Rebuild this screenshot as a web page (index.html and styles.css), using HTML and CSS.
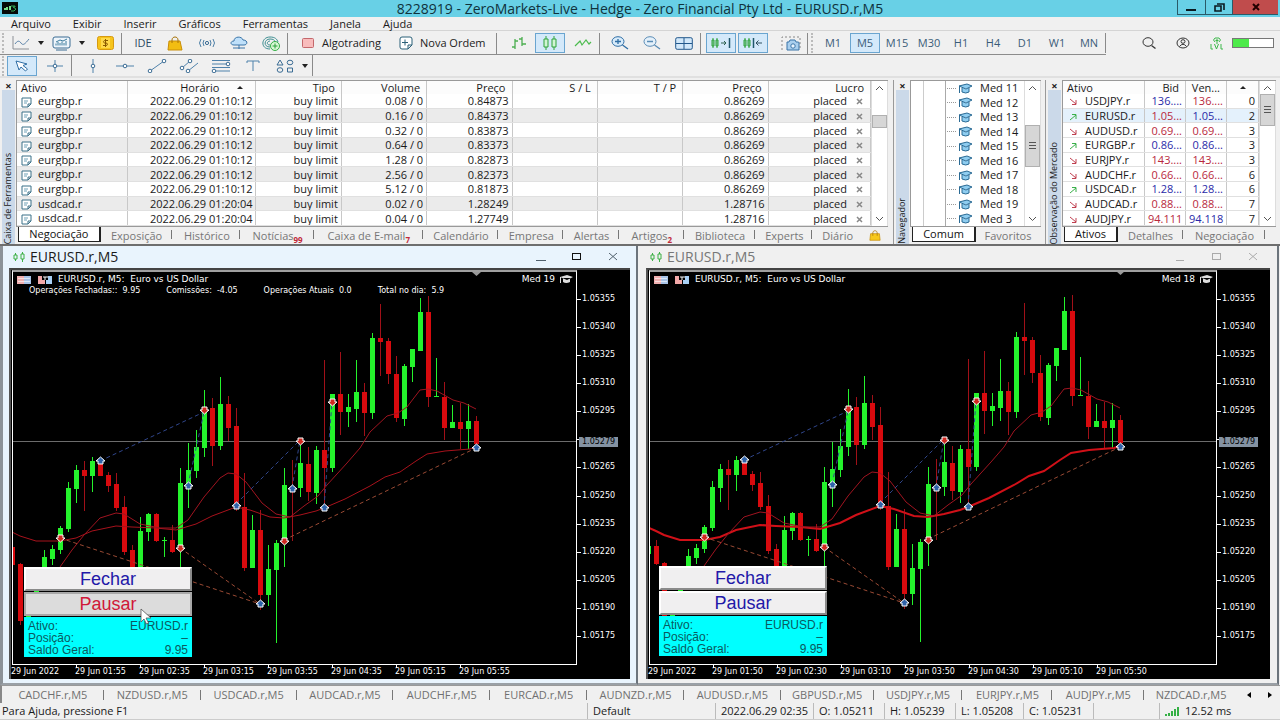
FILE: index.html
```html
<!DOCTYPE html>
<html lang="pt">
<head>
<meta charset="utf-8">
<title>8228919 - ZeroMarkets-Live - Hedge</title>
<link rel="stylesheet" href="styles.css">
</head>
<body>
<header class="titlebar">
  <svg class="app-logo" width="16" height="12" viewBox="0 0 16 12"><rect width="16" height="12" fill="#050a08"/><path d="M2 8V6h2V5h2v3zM7 8V4h2v4z" fill="#7d8"/><path d="M9 4h4v1h-2l3 2-2 2H9" fill="none" stroke="#3a5" stroke-width="1"/></svg>
  <h1 class="app-title">8228919 - ZeroMarkets-Live - Hedge - Zero Financial Pty Ltd - EURUSD.r,M5</h1>
  <div class="win-buttons">
    <button class="win-btn" aria-label="Minimizar"><svg width="12" height="9"><path d="M1 7h10" stroke="#0a1a20" stroke-width="2"/></svg></button>
    <button class="win-btn" aria-label="Restaurar"><svg width="12" height="9"><path d="M2 3h6v5H2zM4 1h7v6" fill="none" stroke="#0a1a20" stroke-width="1.6"/></svg></button>
    <button class="win-btn win-close" aria-label="Fechar janela"><svg width="10" height="9"><path d="M2 1l6 6M8 1L2 7" stroke="#200" stroke-width="2"/></svg></button>
  </div>
</header>
<nav class="menu">
  <button>Arquivo</button><button>Exibir</button><button>Inserir</button><button>Gráficos</button><button>Ferramentas</button><button>Janela</button><button>Ajuda</button>
</nav>
<div class="toolbar toolbar-main">
  <span class="grip"></span>
  <button class="tool-drop" aria-label="Gráfico"><svg width="18" height="14" viewBox="0 0 18 14"><path d="M1 0v13h16" stroke="#8c9096" fill="none"/><path d="M3 8c2-3 4-4 6-1s4 1 8-4" stroke="#5a82a8" fill="none"/></svg><i class="caret"></i></button>
  <button class="tool-drop" aria-label="Modelos"><svg width="19" height="15" viewBox="0 0 19 15"><rect x="1" y="1" width="17" height="11" rx="2" fill="#eef5fb" stroke="#3b6c94"/><path d="M4 9.500V7.500M6 9.500V6M8 9.500V7M10 9.500V5.500M12 9.500V7M14 9.500V5M4 6l4-2 3 1 4-2" stroke="#3b7a9c" fill="none"/><path d="M4 14h11" stroke="#3b6c94"/></svg><i class="caret"></i></button>
  <button class="tool" aria-label="Símbolos"><svg width="17" height="14" viewBox="0 0 17 14"><rect x=".5" y=".5" width="16" height="13" rx="2" fill="#f6c41c" stroke="#d79a10"/><rect x="4" y="2" width="9" height="10" fill="#ffd94a"/><path d="M11 4.500H8c-2 0-2 2.500 0 2.500h1c2 0 2 2.500 0 2.500H6M8.500 3v8" stroke="#8a5a00" fill="none"/></svg></button>
  <span class="sep"></span>
  <button class="tool tool-ide">IDE</button>
  <button class="tool" aria-label="Mercado"><svg width="16" height="15" viewBox="0 0 16 15"><path d="M2 5h11l2 9H1z" fill="#f2bd12" stroke="#c98e08"/><path d="M5 7V4c0-4 6-4 6 0v3" fill="none" stroke="#a87408"/></svg></button>
  <button class="tool" aria-label="Sinais"><svg width="18" height="12" viewBox="0 0 18 12"><circle cx="9" cy="6" r="1.600" fill="none" stroke="#3b6c94"/><path d="M6 3q-2 3 0 6M12 3q2 3 0 6M3 2q-3 4 0 8M15 2q3 4 0 8" fill="none" stroke="#4d7fa6"/></svg></button>
  <button class="tool" aria-label="Nuvem"><svg width="18" height="14" viewBox="0 0 18 14"><path d="M4 9C0 9 0 5 4 5c0-5 8-5 9-1 5 0 5 5 1 5z" fill="#bfe0fa" stroke="#3b75a8"/><path d="M3 12h12M9 9v4" stroke="#3b75a8"/></svg></button>
  <button class="tool" aria-label="VPS"><svg width="19" height="15" viewBox="0 0 19 15"><path d="M8 13C-2 13-1 1 8 1c5 0 7 2 8 5M8 11c-7 0-6-8 0-8 3 0 5 1 5 3M8 9C4 9 5 5 8 5" fill="none" stroke="#3f8f92"/><circle cx="13" cy="10" r="4.500" fill="#d9f7d5" stroke="#35b045"/><path d="M13 7.500v5M10.500 10h5" stroke="#28a038"/></svg></button>
  <span class="sep"></span>
  <button class="tool-text tool-algo"><svg width="12" height="10"><rect x=".5" y=".5" width="11" height="9" rx="1" fill="#f8bcbc" stroke="#c4686c"/></svg>Algotrading</button>
  <button class="tool-text tool-order"><svg width="14" height="14" viewBox="0 0 14 14"><path d="M1 3q0-2 2-2h8q2 0 2 2v6l-4 4H3q-2 0-2-2zM13 9H9v4" fill="#fff" stroke="#2b6078"/><path d="M6 3.500v6M3 6.500h6" stroke="#2b6078"/></svg>Nova Ordem</button>
  <span class="sep"></span>
  <button class="tool tool-bars" aria-label="Barras"><svg width="18" height="14" viewBox="0 0 18 14"><path d="M5 3v10M2 11h3M5 5h3M12 1v9M9 3h3M12 8h4" stroke="#4cae50" fill="none" stroke-width="1.300"/></svg></button>
  <button class="tool-on" aria-label="Velas"><svg width="16" height="14" viewBox="0 0 16 14"><path d="M2 3h4v8H2zM4 0v3M4 11v3M10 3h4v8h-4zM12 0v3M12 11v3" fill="#d2f5d4" stroke="#2fa33a"/></svg></button>
  <button class="tool" aria-label="Linha"><svg width="18" height="10" viewBox="0 0 18 10"><path d="M1 8l5-5 2 4 4-5 3 4 2-2" fill="none" stroke="#4cbb4e" stroke-width="1.200"/></svg></button>
  <span class="sep"></span>
  <button class="tool tool-zoom" aria-label="Ampliar"><svg width="18" height="14" viewBox="0 0 18 14"><ellipse cx="7" cy="5.500" rx="6" ry="4.800" fill="#d8ebfa" stroke="#2f6ea5"/><path d="M11.500 9l5.500 4M7 3v5M4 5.500h6" stroke="#2f6ea5" stroke-width="1.300"/></svg></button>
  <button class="tool" aria-label="Reduzir"><svg width="18" height="14" viewBox="0 0 18 14"><ellipse cx="7" cy="5.500" rx="6" ry="4.800" fill="#e4f0fa" stroke="#5a8cb5"/><path d="M11.500 9l5.500 4M4 5.500h6" stroke="#5a8cb5" stroke-width="1.300"/></svg></button>
  <button class="tool" aria-label="Lado a lado"><svg width="18" height="13" viewBox="0 0 18 13"><rect x=".7" y=".7" width="16.600" height="11.600" rx="1.500" fill="#d2e8fa" stroke="#22588c"/><path d="M9 1v11M1 6.500h16" stroke="#22588c"/></svg></button>
  <span class="sep"></span>
  <button class="tool-on" aria-label="Rolagem"><svg width="22" height="12" viewBox="0 0 22 12"><path d="M2 3h2v6H2zM3 1v10M6 3h2v6H6zM7 1v10" fill="none" stroke="#2fa33a"/><path d="M11 6h5M14 4l2 2-2 2" fill="none" stroke="#2f6050"/><path d="M19.500 1v10" stroke="#22586c" stroke-width="1.500"/></svg></button>
  <button class="tool-on" aria-label="Deslocar"><svg width="22" height="12" viewBox="0 0 22 12"><path d="M2 3h2v6H2zM3 1v10M6 3h2v6H6zM7 1v10" fill="none" stroke="#2fa33a"/><path d="M14 6h6M16.500 3.500L14 6l2.500 2.500" fill="none" stroke="#2f5060"/><path d="M11.500 1v10" stroke="#22586c" stroke-width="1.500"/></svg></button>
  <button class="tool tool-shot" aria-label="Captura"><svg width="20" height="15" viewBox="0 0 20 15"><path d="M1 14V1h18v13" fill="none" stroke="#888" stroke-dasharray="2 2"/><path d="M6 6h2l1-2h5l1 2h2q1 0 1 1v7H6z" fill="#a9cfee" stroke="#3b75a8"/><circle cx="12" cy="10" r="2.200" fill="#eaf5ff" stroke="#3b75a8"/></svg></button>
  <span class="sep"></span>
  <span class="grip grip-mid"></span>
  <div class="frames">
    <button>M1</button><button class="frame-on">M5</button><button>M15</button><button>M30</button><button>H1</button><button>H4</button><button>D1</button><button>W1</button><button>MN</button>
  </div>
  <div class="right-tools">
    <button aria-label="Buscar"><svg width="14" height="12" viewBox="0 0 14 12"><ellipse cx="6" cy="5" rx="5" ry="4.300" fill="none" stroke="#333"/><path d="M9.500 8.500l4 3" stroke="#333" stroke-width="1.300"/></svg></button>
    <button aria-label="Conta"><svg width="14" height="12" viewBox="0 0 14 12"><ellipse cx="7" cy="6" rx="6" ry="5" fill="none" stroke="#333"/><ellipse cx="7" cy="4.500" rx="2" ry="1.800" fill="none" stroke="#333"/><path d="M3.500 9.500q3.500-4.500 7 0" fill="none" stroke="#333"/></svg></button>
    <button aria-label="Nível"><svg width="14" height="13" viewBox="0 0 14 13"><path d="M5 5q-3-2 0-4h4q3 2 0 4M7 2v5M5.500 3.500h3M1 7v5h2M4.500 7l2 5 2-5M11 7v5h2" fill="none" stroke="#3db84a"/></svg></button>
    <span class="battery"><i></i></span>
  </div>
</div>
<div class="toolbar toolbar-draw">
  <span class="grip"></span>
  <button class="tool-on tool-cursor" aria-label="Cursor"><svg width="14" height="12" viewBox="0 0 14 12"><path d="M1 1l11 3-4 1.500 4.500 3.500-2 2-4.500-4L4 10z" fill="#fff" stroke="#2f6ea5"/></svg></button>
  <button class="tool tool-cross" aria-label="Mira"><svg width="16" height="12" viewBox="0 0 16 12"><path d="M8 0v12M0 6h16" stroke="#4f82ab"/><circle cx="8" cy="6" r="1.800" fill="#fff" stroke="#3b6c94"/></svg></button>
  <span class="sep"></span>
  <button class="tool tool-first" aria-label="Linha vertical"><svg width="6" height="14" viewBox="0 0 6 14"><path d="M3 0v14" stroke="#4f82ab"/><circle cx="3" cy="7" r="1.800" fill="#fff" stroke="#3b6c94"/></svg></button>
  <button class="tool" aria-label="Linha horizontal"><svg width="18" height="6" viewBox="0 0 18 6"><path d="M0 3h18" stroke="#4f82ab"/><circle cx="9" cy="3" r="1.800" fill="#fff" stroke="#3b6c94"/></svg></button>
  <button class="tool" aria-label="Tendência"><svg width="20" height="14" viewBox="0 0 20 14"><path d="M3 12L17 2" stroke="#4f82ab"/><circle cx="3" cy="12" r="1.800" fill="#fff" stroke="#3b6c94"/><circle cx="17" cy="2" r="1.800" fill="#fff" stroke="#3b6c94"/></svg></button>
  <button class="tool" aria-label="Canal"><svg width="20" height="14" viewBox="0 0 20 14"><path d="M3 9l8-7M9 12l10-8" stroke="#4f82ab"/><circle cx="3" cy="9" r="1.800" fill="#fff" stroke="#3b6c94"/><circle cx="11" cy="2" r="1.800" fill="#fff" stroke="#3b6c94"/><circle cx="9" cy="12" r="1.800" fill="#fff" stroke="#3b6c94"/></svg></button>
  <button class="tool" aria-label="Fibonacci"><svg width="20" height="14" viewBox="0 0 20 14"><path d="M1 1.500h18M1 5h15M1 8.500h18M4 12h15" stroke="#4f82ab"/><circle cx="17" cy="5" r="1.800" fill="#fff" stroke="#3b6c94"/><circle cx="3" cy="12" r="1.800" fill="#fff" stroke="#3b6c94"/></svg></button>
  <button class="tool" aria-label="Texto"><svg width="14" height="11" viewBox="0 0 14 11"><path d="M1 3V1h12v2M7 1v10" fill="none" stroke="#4f82ab"/></svg></button>
  <button class="tool-drop tool-shapes" aria-label="Formas"><svg width="18" height="14" viewBox="0 0 18 14"><path d="M4 1L1 6h6zM11.500 9h5v4h-5z" fill="none" stroke="#3b6c94"/><ellipse cx="14" cy="3.500" rx="2.800" ry="2.300" fill="none" stroke="#3b6c94"/><ellipse cx="4" cy="11" rx="2.800" ry="2.300" fill="none" stroke="#3b6c94"/></svg><i class="caret"></i></button>
  <span class="sep"></span>
</div>

<main class="docks">
  <section class="dock dock-toolbox">
    <div class="caption"><button aria-label="Fechar Caixa de Ferramentas">×</button><span>Caixa de Ferramentas</span></div>
    <div class="dock-body">
      <div class="grid-wrap">
        <table class="trades">
          <colgroup><col class="t1"><col class="t2"><col><col><col><col><col><col><col class="t9"></colgroup>
          <thead><tr><th class="left">Ativo</th><th class="sorted">Horário<i class="up"></i></th><th>Tipo</th><th>Volume</th><th>Preço</th><th>S / L</th><th>T / P</th><th>Preço</th><th>Lucro</th></tr></thead>
          <tbody id="trades"></tbody>
        </table>
        <div class="scroll"><svg width="9" height="6"><path d="M1 5l3.500-3.500L8 5" fill="none" stroke="#555"/></svg><i class="thumb thumb-a"></i><svg width="9" height="6"><path d="M1 1l3.500 3.500L8 1" fill="none" stroke="#555"/></svg></div>
      </div>
      <div class="tabs tabs-toolbox">
        <button class="tab-on">Negociação</button><button>Exposição</button><button>Histórico</button><button>Notícias<sub>99</sub></button><button>Caixa de E-mail<sub>7</sub></button><button>Calendário</button><button>Empresa</button><button>Alertas</button><button>Artigos<sub>2</sub></button><button>Biblioteca</button><button>Experts</button><button class="tab-last">Diário</button>
        <svg class="bag" width="12" height="11" viewBox="0 0 16 15"><path d="M2 5h12l1 9H1z" fill="#f7c81a" stroke="#c98e08"/><path d="M5 8V4c0-4 6-4 6 0v4" fill="none" stroke="#a87408"/></svg>
      </div>
    </div>
  </section>
  <section class="dock dock-nav">
    <div class="caption"><button aria-label="Fechar Navegador">×</button><span>Navegador</span></div>
    <div class="dock-body">
      <div class="grid-wrap">
        <ul class="tree" id="tree"></ul>
        <div class="scroll"><svg width="9" height="6"><path d="M1 5l3.500-3.500L8 5" fill="none" stroke="#555"/></svg><i class="thumb thumb-b"></i><svg width="9" height="6"><path d="M1 1l3.500 3.500L8 1" fill="none" stroke="#555"/></svg></div>
      </div>
      <div class="tabs tabs-nav"><button class="tab-on">Comum</button><button class="tab-last">Favoritos</button></div>
    </div>
  </section>
  <section class="dock dock-market">
    <div class="caption"><button aria-label="Fechar Observação do Mercado">×</button><span>Observação do Mercado</span></div>
    <div class="dock-body">
      <div class="grid-wrap">
        <table class="quotes">
          <colgroup><col><col class="q2"><col class="q2"><col class="q4"></colgroup>
          <thead><tr><th class="left">Ativo</th><th>Bid</th><th>Ven...</th><th class="sort-only"><i class="up"></i></th></tr></thead>
          <tbody id="quotes"></tbody>
        </table>
        <div class="scroll"><svg width="9" height="6"><path d="M1 5l3.500-3.500L8 5" fill="none" stroke="#555"/></svg><i class="thumb thumb-c"></i><svg width="9" height="6"><path d="M1 1l3.500 3.500L8 1" fill="none" stroke="#555"/></svg></div>
      </div>
      <div class="tabs tabs-market"><button class="tab-on">Ativos</button><button>Detalhes</button><button>Negociação</button></div>
    </div>
  </section>
</main>

<div class="workspace">
  <section class="chart chart-active">
    <header class="chart-title">
      <svg width="12" height="10" viewBox="0 0 12 10"><path d="M1 3h3v4H1zM2.500 1v2M2.500 7v2M8 2h3v5H8zM9.500 0v2M9.500 7v3" fill="none" stroke="#3cb045"/></svg>
      <h2>EURUSD.r,M5</h2>
      <div class="chart-buttons"><button aria-label="Minimizar"><svg width="10" height="10"><path d="M0 8.500h10" stroke="currentColor"/></svg></button><button aria-label="Maximizar"><svg class="dark" width="10" height="8"><rect x=".5" y=".5" width="8" height="6" fill="none" stroke="currentColor"/></svg></button><button aria-label="Fechar"><svg width="10" height="8"><path d="M1 0l8 7M9 0L1 7" stroke="currentColor"/></svg></button></div>
    </header>
    <div class="canvas">
      <div class="plot">
        <svg class="candles" id="chart-a"></svg>
        <div class="legend">
          <p class="legend-line"><svg width="14" height="8"><path d="M0 0h7v8H0z" fill="#f0b0b0"/><path d="M7 0h7v8H7z" fill="#a9c4e8"/><path d="M1 2.500h12M1 5.500h12" stroke="#fff" stroke-opacity=".6"/></svg><svg class="second" width="14" height="8"><path d="M0 0h4v4h3v4H0z" fill="#f3a9a9"/><path d="M14 0h-4v4H8v4h6z" fill="#a9d0f5"/><path d="M5 1h5M7 1v3" stroke="#fff"/></svg><span>EURUSD.r, M5:&nbsp; Euro vs US Dollar</span><span class="expert">Med 19</span><svg width="14" height="9" viewBox="0 0 14 9"><path d="M1 2l7-2 6 2-6 3zM4 3v4q3 2 7 0V3" fill="#ddd"/><path d="M1.500 2v6" stroke="#ddd"/></svg></p>
          <p class="stats"><span>Operações Fechadas:: &nbsp;9.95</span><span>Comissões: &nbsp;-4.05</span><span>Operações Atuais &nbsp;0.0</span><span>Total no dia: &nbsp;5.9</span></p>
        </div>
        <div class="panel">
          <button class="panel-btn">Fechar</button>
          <button class="panel-btn panel-hot">Pausar</button>
          <dl class="info"><dt>Ativo:</dt><dd>EURUSD.r</dd><dt>Posição:</dt><dd>–</dd><dt>Saldo Geral:</dt><dd>9.95</dd></dl>
        </div>
        <svg class="pointer" width="12" height="17" viewBox="0 0 12 17"><path d="M1 1v13l3-3 2.500 5 2-1L6 10h5z" fill="#fff" stroke="#555" stroke-width=".8"/></svg>
      </div>
      <div class="prices"></div>
      <div class="times"><span>29 Jun 2022</span><span>29 Jun 01:55</span><span>29 Jun 02:35</span><span>29 Jun 03:15</span><span>29 Jun 03:55</span><span>29 Jun 04:35</span><span>29 Jun 05:15</span><span>29 Jun 05:55</span></div>
    </div>
  </section>
  <section class="chart chart-idle">
    <header class="chart-title">
      <svg width="12" height="10" viewBox="0 0 12 10"><path d="M1 3h3v4H1zM2.500 1v2M2.500 7v2M8 2h3v5H8zM9.500 0v2M9.500 7v3" fill="none" stroke="#3cb045"/></svg>
      <h2>EURUSD.r,M5</h2>
      <div class="chart-buttons"><button aria-label="Minimizar"><svg width="10" height="10"><path d="M0 8.500h8" stroke="currentColor"/></svg></button><button aria-label="Maximizar"><svg width="10" height="8"><rect x=".5" y=".5" width="8" height="6" fill="none" stroke="currentColor"/></svg></button><button aria-label="Fechar"><svg width="10" height="8"><path d="M1 0l8 7M9 0L1 7" stroke="currentColor"/></svg></button></div>
    </header>
    <div class="canvas">
      <div class="plot">
        <svg class="candles" id="chart-b"></svg>
        <div class="legend">
          <p class="legend-line"><svg width="14" height="8"><path d="M0 0h7v8H0z" fill="#f0b0b0"/><path d="M7 0h7v8H7z" fill="#a9c4e8"/><path d="M1 2.500h12M1 5.500h12" stroke="#fff" stroke-opacity=".6"/></svg><svg class="second" width="14" height="8"><path d="M0 0h4v4h3v4H0z" fill="#f3a9a9"/><path d="M14 0h-4v4H8v4h6z" fill="#a9d0f5"/><path d="M5 1h5M7 1v3" stroke="#fff"/></svg><span>EURUSD.r, M5:&nbsp; Euro vs US Dollar</span><span class="expert">Med 18</span><svg width="14" height="9" viewBox="0 0 14 9"><path d="M1 2l7-2 6 2-6 3zM4 3v4q3 2 7 0V3" fill="#ddd"/><path d="M1.500 2v6" stroke="#ddd"/></svg></p>
        </div>
        <div class="panel">
          <button class="panel-btn">Fechar</button>
          <button class="panel-btn">Pausar</button>
          <dl class="info"><dt>Ativo:</dt><dd>EURUSD.r</dd><dt>Posição:</dt><dd>–</dd><dt>Saldo Geral:</dt><dd>9.95</dd></dl>
        </div>
      </div>
      <div class="prices"></div>
      <div class="times"><span>29 Jun 2022</span><span>29 Jun 01:50</span><span>29 Jun 02:30</span><span>29 Jun 03:10</span><span>29 Jun 03:50</span><span>29 Jun 04:30</span><span>29 Jun 05:10</span><span>29 Jun 05:50</span></div>
    </div>
  </section>
</div>

<nav class="symbols">
  <button>CADCHF.r,M5</button><button>NZDUSD.r,M5</button><button>USDCAD.r,M5</button><button>AUDCAD.r,M5</button><button>AUDCHF.r,M5</button><button>EURCAD.r,M5</button><button>AUDNZD.r,M5</button><button>AUDUSD.r,M5</button><button>GBPUSD.r,M5</button><button>USDJPY.r,M5</button><button>EURJPY.r,M5</button><button>AUDJPY.r,M5</button><button>NZDCAD.r,M5</button>
  <span class="arrows"><button aria-label="Anterior"><svg width="4" height="6"><path d="M4 0v6L0 3z"/></svg></button><button aria-label="Próximo"><svg width="4" height="6"><path d="M0 0v6l4-3z"/></svg></button></span>
</nav>
<footer class="status">
  <span>Para Ajuda, pressione F1</span><span>Default</span><span>2022.06.29 02:35</span><span>O: 1.05211</span><span>H: 1.05239</span><span>L: 1.05208</span><span>C: 1.05231</span><span></span><span><svg width="15" height="9"><path d="M1 9V7M4 9V6M7 9V4M10 9V2M13 9V0" stroke="#35b045" stroke-width="2"/></svg>12.52 ms</span>
</footer>
<script src="script.js"></script>
</body>
</html>
```
FILE: styles.css
```css
* { box-sizing: border-box; }
body {
  margin: 0; height: 100vh; min-height: 600px; overflow: hidden;
  display: flex; flex-direction: column;
  background: #f0f0f0; color: #1a1a1a;
  font: 11px/14px "Open Sans", "Noto Sans", sans-serif;
}
button { font: inherit; color: inherit; background: none; border: 0; padding: 0; margin: 0; white-space: nowrap; }
svg { display: block; flex: none; }
h1, h2, p, ul, dl, dd { margin: 0; padding: 0; font-weight: normal; }

.titlebar { flex: none; height: 17px; display: grid; grid-template-columns: 103px 1fr 103px; background: #68d0e6; }
.app-logo { margin: 2px; }
.app-title { text-align: center; font-size: 14px; line-height: 17px; color: #10323c; white-space: nowrap; }
.win-buttons { display: flex; height: 15px; margin-right: 2px; }
.win-btn { width: 28px; border: 1px solid #2a5a68; border-top: 0; border-right: 0; display: grid; place-items: center; }
.win-close { width: 46px; background: #c04c4c; }

.menu { flex: none; height: 14px; display: flex; gap: 22px; padding-left: 11px; border-bottom: 1px solid #d4d4d4; line-height: 13px; }

.toolbar { flex: none; display: flex; align-items: center; position: relative; }
.toolbar-main { height: 24px; color: #2a4a62; }
.toolbar-main::after { content: ""; position: absolute; left: 0; bottom: 0; width: 1106px; border-bottom: 1px solid #8c8c8c; }
.toolbar-draw { height: 23px; border-bottom: 2px solid #e0e0e0; }
.grip { width: 2px; height: 20px; margin: 0 3px 0 2px; border-left: 2px dotted #bbb; }
.grip-mid { margin: 0 4px 0 3px; }
.sep { width: 1px; height: 21px; background: #8a8a8a; }
.tool, .tool-drop, .tool-on { height: 20px; display: flex; align-items: center; justify-content: center; }
.tool { width: 32px; }
.tool-drop { width: 41px; gap: 8px; }
.tool-on { width: 30px; background: #d4e9fa; border: 1px solid #6aa5d0; margin-right: 2px; }
.tool-ide { margin-left: 5px; }
.tool-bars { margin-left: 6px; }
.tool-zoom { margin-left: 4px; }
.tool-shot { margin-left: 5px; }
.toolbar-main .sep + .tool-on { margin-left: 5px; }
.tool-cross { margin-right: 0; }
.tool-first { margin-left: 5px; }
.tool-shapes { margin-left: 2px; }
.caret { border: 3px solid transparent; border-top: 4px solid #222; border-bottom: 0; }
.tool-text { display: flex; align-items: center; color: #222; width: 104px; gap: 8px; }
.tool-algo { padding-left: 14px; }
.tool-order { padding-left: 7px; gap: 7px; }
.frames { display: flex; height: 20px; border-right: 1px solid #8a8a8a; color: #3a5c78; }
.frames button { width: 32px; }
.frames .frame-on { width: 30px; margin: 0 1px; background: #d4e9fa; border: 1px solid #6aa5d0; }
.right-tools { margin-left: auto; display: flex; align-items: center; gap: 20px; padding-right: 6px; }
.battery { width: 42px; height: 10px; margin-left: -12px; border: 1px solid #777; background: #fff; }
.battery i { display: block; width: 40%; height: 100%; background: #4dea4a; }

.docks { flex: none; display: grid; grid-template-columns: 893fr 152fr 235fr; height: 168px; padding-top: 2px; border-bottom: 2px solid #6e6e6e; }
.dock { display: flex; min-width: 0; }
.dock-toolbox { padding: 0 5px 0 2px; }
.dock-nav { border-left: 1px solid #999; padding: 0 4px 0 2px; }
.dock-market { border-left: 1px solid #999; padding: 0 4px 0 2px; }
.caption { flex: none; width: 13px; margin-right: 1px; display: flex; flex-direction: column; justify-content: space-between; background: #cbd9e9; }
.caption button { background: #f0f0f0; height: 10px; line-height: 9px; font-weight: bold; }
.caption span { writing-mode: vertical-rl; transform: rotate(180deg); font-size: 9px; line-height: 12px; white-space: nowrap; }
.dock-body { flex: 1; min-width: 0; display: flex; flex-direction: column; }
.grid-wrap { height: 147px; display: flex; background: #fff; border: 1px solid #999; border-width: 1px 0 1px 1px; overflow: hidden; }
table { table-layout: fixed; width: 100%; height: 145px; border-collapse: collapse; line-height: 13px; }
th, td { padding: 0 3px; font-weight: normal; text-align: right; border-right: 1px solid #c8c8c8; white-space: nowrap; overflow: hidden; }
td { border-bottom: 1px solid #e0e0e0; }
th.left, td.left { text-align: left; padding-left: 4px; }
th { padding-right: 6px; background: #fcfcfc; }
.trades col { width: 10%; }
.trades .t1 { width: 13%; } .trades .t2 { width: 15%; } .trades .t9 { width: 12%; }
.trades tbody tr:nth-child(even) { background: #ebebeb; }
.trades td:first-child svg { display: inline-block; vertical-align: middle; margin-right: 6px; }
.trades td:last-child svg { display: inline-block; margin: 0 4px 0 9px; }
.up { display: inline-block; border: 3px solid transparent; border-bottom: 3px solid #222; border-top: 0; margin: 0 6px 3px 18px; }
.sort-only .up { margin: 0 6px 3px 0; }
.q2 { width: 41px; } .q4 { width: 32px; }
.quotes td:first-child svg { display: inline-block; vertical-align: middle; margin: 0 8px 0 2px; }
.quotes .picked { background: #e4f1fc; }
.blue { color: #2a2aa8; } .red { color: #b8283c; }
.scroll { flex: none; width: 17px; display: flex; flex-direction: column; align-items: center; justify-content: space-between; padding: 4px 0; position: relative; border: 1px solid #ddd; border-width: 0 1px; }
.thumb { position: absolute; left: 0; right: 0; background: #d6d6d6; border: 1px solid #b0b0b0; }
.thumb-a { top: 34px; height: 13px; }
.thumb-b { top: 44px; height: 42px; }
.thumb-c { top: 13px; height: 32px; }
.thumb-b::after, .thumb-c::after { content: ""; position: absolute; left: 3px; right: 3px; top: 50%; height: 7px; margin-top: -4px; background: repeating-linear-gradient(#555 0 1px, transparent 1px 3px); }
.tree { flex: 1; list-style: none; display: flex; flex-direction: column; justify-content: space-between; padding-left: 12px; background: linear-gradient(#aaa, #aaa) 34px 0 / 1px 100% no-repeat, linear-gradient(#ccc, #ccc) 12px 0 / 1px 100% no-repeat; }
.tree li { display: flex; align-items: center; gap: 7px; padding-left: 24px; }
.tree li::before { content: ""; width: 9px; border-top: 1px dotted #999; margin-right: -5px; }
.tabs { display: flex; flex: none; height: 17px; color: #777; line-height: 15px; }
.tabs button { position: relative; border-right: 1px solid transparent; }
.tabs button::after { content: ""; position: absolute; right: 0; top: 3px; height: 9px; border-right: 1px solid #777; }
.tabs .tab-on { height: 15px; color: #111; background: #fff; border: 1px solid #222; border-top: 0; border-right-width: 2px; line-height: 14px; }
.tabs .tab-on::after, .tabs .tab-last::after { display: none; }
.tabs sub { color: #c02838; font-size: 8px; line-height: 0; vertical-align: -3px; font-weight: bold; }
.tabs-toolbox { display: grid; grid-template-columns: 83fr 73fr 68fr 74fr 109fr 76fr 65fr 56fr 65fr 72fr 57fr 50fr 25fr; padding-left: 2px; }
.bag { margin: 3px 0 0 6px; }
.tabs-nav { display: grid; grid-template-columns: 64px 1fr; padding-left: 2px; }
.tabs-market { display: grid; grid-template-columns: 54fr 66fr 82fr 10fr; padding-left: 2px; }

.workspace { flex: 1; min-height: 0; display: grid; grid-template-columns: 638fr 642fr; grid-template-rows: 100%; background: #f0f0f0; }
.chart { display: flex; flex-direction: column; min-width: 0; border-bottom: 2px solid #9aa0a6; }
.chart-active { background: #e9f4fd; border-left: 3px solid #8c9298; border-right: 2px solid #6c747c; padding: 0 6px; }
.chart-idle { background: #f0f0f0; border-right: 2px solid #6c747c; padding: 0 7px 0 8px; margin-right: 1px; }
.chart-title { flex: none; height: 22px; display: flex; align-items: center; gap: 5px; padding-left: 4px; }
.chart-idle .chart-title { color: #777; }
.chart-title h2 { font-size: 14px; line-height: 20px; }
.chart-buttons { margin-left: auto; display: flex; gap: 26px; padding-right: 12px; color: #50606c; }
.chart-idle .chart-buttons { color: #aaa; }
.dark { color: #111; }
.canvas {
  flex: 1; min-height: 0; display: grid; grid-template-columns: 1fr 53px; grid-template-rows: 1fr 14px;
  background: #000; color: #fff; border-left: 2px solid #555; border-top: 2px solid #444; margin-bottom: 4px;
  font: 8px/10px "DejaVu Sans", sans-serif;
}
.plot { position: relative; border: 1px solid #fff; border-top: 2px solid #a0a0a0; margin-left: 1px; min-height: 0; overflow: hidden; }
.candles { position: absolute; width: 100%; height: 100%; }
.legend { position: relative; padding: 2px 3px 0 4px; }
.legend-line { display: flex; align-items: center; height: 11px; font-size: 9px; line-height: 11px; }
.legend-line .second { margin: 0 6px 0 7px; }
.expert { margin: 0 4px 0 auto; }
.stats { display: flex; gap: 26px; padding-left: 12px; line-height: 11px; white-space: nowrap; }
.panel { position: absolute; left: 11px; bottom: 7px; width: 168px; display: grid; gap: 1px; font-family: "Liberation Sans", Arial, sans-serif; }
.chart-idle .panel { left: 9px; bottom: 8px; }
.panel-btn { height: 24px; background: #f0eff0; border: 2px solid #fff; border-right-color: #8a8a8a; border-bottom-color: #8a8a8a; color: #2218a8; font-size: 18px; line-height: 20px; }
.panel-hot { background: #dcdcdc; color: #d01838; border-color: #a8a8a8; }
.info { display: grid; grid-template-columns: auto auto; background: #0ff; color: #0a5a60; font-size: 12px; line-height: 12px; padding: 3px 4px 1px; }
.info dd { text-align: right; }
.pointer { position: absolute; left: 127px; bottom: 39px; }
.prices { position: relative; display: flex; flex-direction: column; justify-content: space-between; padding: 24px 0 24px 5px; min-height: 0; }
.prices span { position: relative; }
.prices span::before { content: ""; position: absolute; left: -5px; top: 5px; width: 4px; border-top: 1px solid #fff; }
.prices .now { position: absolute; left: 2px; width: 39px; top: 167px; padding-left: 3px; line-height: 10px; background: #8492a2; color: #000; }
.prices .now::before { display: none; }
.times { grid-column: 1 / -1; display: flex; line-height: 13px; overflow: hidden; }
.times span { flex: none; width: 64px; position: relative; white-space: nowrap; }
.times span + span::before { content: ""; position: absolute; left: 1px; top: 0; height: 3px; border-left: 1px solid #fff; }

.symbols { flex: none; height: 18px; display: grid; grid-template-columns: 102fr 97fr 96fr 97fr 97fr 97fr 97fr 97fr 93fr 89fr 90fr 92fr 94fr 42fr; color: #707070; border-top: 1px solid #999; border-left: 2px solid #888; line-height: 18px; }
.symbols > button { position: relative; text-align: center; }
.symbols > button::after { content: ""; position: absolute; right: 0; top: 4px; height: 10px; border-right: 1px solid #777; }
.symbols > button:nth-child(13)::after { display: none; }
.arrows { display: flex; justify-content: space-around; align-items: center; }
.status { flex: none; height: 17px; display: grid; grid-template-columns: 587fr 128fr 98fr 71fr 71fr 68fr 70fr 66fr 121fr; line-height: 16px; border-bottom: 1px solid #ccc; }
.status span { border-left: 1px solid #bbb; padding-left: 5px; white-space: nowrap; display: flex; align-items: center; gap: 5px; }
.status span:first-child { border: 0; padding-left: 2px; }
```
FILE: script.js
```js
const byId = (id) => document.getElementById(id);

const docIcon = '<svg width="11" height="11" viewBox="0 0 11 11"><path d="M1 1h9v6l-3 3H1zM10 7H7v3" fill="#fff" stroke="#3a7088"/><path d="M3 4h4M3 6h3" stroke="#6fa0b5"/></svg>';
const crossIcon = '<svg width="7" height="7"><path d="M1 1l5 5M6 1L1 6" stroke="#888" stroke-width="1.500"/></svg>';
const trades = [
  ['eurgbp.r', '01:10:12', '0.08', '0.84873', '0.86269'],
  ['eurgbp.r', '01:10:12', '0.16', '0.84373', '0.86269'],
  ['eurgbp.r', '01:10:12', '0.32', '0.83873', '0.86269'],
  ['eurgbp.r', '01:10:12', '0.64', '0.83373', '0.86269'],
  ['eurgbp.r', '01:10:12', '1.28', '0.82873', '0.86269'],
  ['eurgbp.r', '01:10:12', '2.56', '0.82373', '0.86269'],
  ['eurgbp.r', '01:10:12', '5.12', '0.81873', '0.86269'],
  ['usdcad.r', '01:20:04', '0.02', '1.28249', '1.28716'],
  ['usdcad.r', '01:20:04', '0.04', '1.27749', '1.28716'],
];
byId('trades').innerHTML = trades.map(([s, t, v, p, c]) =>
  `<tr><td class="left">${docIcon}${s}</td><td>2022.06.29 ${t}</td><td>buy limit</td><td>${v} / 0</td><td>${p}</td><td></td><td></td><td>${c}</td><td>placed${crossIcon}</td></tr>`).join('');

const capIcon = '<svg width="15" height="11" viewBox="0 0 15 11"><path d="M1 3l8-2 5 2-6 3zM4 5v4q4 2 7 0V5" fill="#8fcdf0" stroke="#2a6a94"/><path d="M1.500 3v7" stroke="#2a6a94"/></svg>';
byId('tree').innerHTML = [11, 12, 13, 14, 15, 16, 17, 18, 19, 3].map((n) => `<li>${capIcon}Med ${n}</li>`).join('');

const arrow = (up) => up
  ? '<svg width="8" height="8"><path d="M1 7l6-5M3 1.500h4V6" fill="none" stroke="#3ab04a"/></svg>'
  : '<svg width="8" height="8"><path d="M1 1l6 5M7 2v4.500H3" fill="none" stroke="#c04050"/></svg>';
const quotes = [
  ['USDJPY.r', 0, 'blue', '136....', 'red', '136....', 0],
  ['EURUSD.r', 1, 'red', '1.05...', 'blue', '1.05...', 2],
  ['AUDUSD.r', 0, 'red', '0.69...', 'red', '0.69...', 3],
  ['EURGBP.r', 1, 'blue', '0.86...', 'blue', '0.86...', 3],
  ['EURJPY.r', 0, 'red', '143....', 'red', '143....', 3],
  ['AUDCHF.r', 0, 'red', '0.66...', 'red', '0.66...', 6],
  ['USDCAD.r', 1, 'blue', '1.28...', 'blue', '1.28...', 6],
  ['AUDCAD.r', 0, 'red', '0.88...', 'red', '0.88...', 7],
  ['AUDJPY.r', 0, 'red', '94.111', 'blue', '94.118', 7],
];
byId('quotes').innerHTML = quotes.map(([s, up, bc, b, ac, a, n], i) =>
  `<tr${i === 1 ? ' class="picked"' : ''}><td class="left">${arrow(up)}${s}</td><td class="${bc}">${b}</td><td class="${ac}">${a}</td><td>${n}</td></tr>`).join('');

/* the level under the current price is covered by its tag, so its row stays blank */
const prices = ['355', '340', '325', '310', '295', '', '265', '250', '235', '220', '205', '190', '175'];
document.querySelectorAll('.prices').forEach((el) => {
  el.innerHTML = prices.map((p) => `<span>${p ? '1.05' + p : '&nbsp;'}</span>`).join('') + '<span class="now">1.05279</span>';
});

/* x, wick top, body top, body bottom, wick bottom, rising */
const candles = [
  [20, 563, 564, 621, 625, 0], [28, 592, 593, 618, 620, 1], [36, 570, 571, 593, 594, 1],
  [44, 550, 557, 570, 572, 1], [52, 545, 549, 559, 565, 1], [60, 526, 528, 550, 554, 1],
  [68, 482, 488, 529, 532, 1], [76, 465, 470, 489, 503, 1], [84, 461, 470, 476, 511, 0],
  [92, 457, 461, 476, 492, 1], [100, 461, 463, 476, 476, 0], [108, 472, 475, 486, 492, 0],
  [116, 473, 484, 508, 511, 0], [124, 496, 507, 552, 555, 0], [132, 545, 550, 567, 570, 0],
  [140, 517, 531, 567, 569, 1], [148, 513, 514, 532, 541, 1], [156, 513, 514, 541, 542, 0],
  [164, 537, 540, 541, 557, 1], [172, 525, 540, 552, 553, 0], [180, 468, 483, 547, 567, 1],
  [188, 443, 470, 484, 508, 1], [196, 430, 447, 471, 478, 1], [204, 390, 410, 448, 457, 1],
  [212, 398, 408, 446, 466, 0], [220, 377, 404, 446, 450, 1], [228, 396, 404, 428, 441, 0],
  [236, 408, 426, 505, 511, 0], [244, 473, 507, 568, 571, 0], [252, 515, 530, 568, 568, 1],
  [260, 510, 530, 595, 610, 0], [268, 545, 569, 595, 606, 1], [276, 540, 543, 570, 643, 1],
  [284, 468, 485, 541, 567, 1], [292, 460, 487, 489, 541, 0], [300, 445, 463, 488, 497, 1],
  [308, 447, 464, 492, 501, 0], [316, 446, 450, 493, 504, 1], [324, 360, 450, 468, 508, 0],
  [332, 394, 394, 468, 472, 1], [340, 352, 394, 412, 435, 0], [348, 394, 407, 412, 427, 1],
  [356, 360, 392, 409, 422, 1], [364, 383, 392, 413, 436, 0], [372, 333, 338, 413, 419, 1],
  [380, 304, 338, 342, 376, 0], [388, 338, 341, 374, 384, 0], [396, 356, 374, 418, 422, 0],
  [404, 364, 366, 419, 426, 1], [412, 349, 349, 367, 382, 1], [420, 298, 312, 351, 351, 1],
  [428, 296, 312, 397, 407, 0], [436, 358, 396, 397, 397, 1], [444, 382, 397, 428, 440, 0],
  [452, 405, 422, 428, 428, 1], [460, 403, 422, 429, 449, 0], [468, 404, 421, 429, 449, 1],
  [476, 416, 421, 444, 446, 0],
];
const slow = '5,529 12,532 20,536 36,541 60,541 76,538 92,531 116,526 132,527 156,528 176,530 196,524 212,516 236,507 250,510 270,517 284,518 300,515 316,511 324,508 345,499 370,486 385,477 400,472 416,461 427,454 445,451 470,449 476,447';
const fast = '60,567 72,550 84,535 100,518 116,513 124,514 140,524 160,528 176,528 188,520 204,497 220,478 228,473 236,474 246,482 262,503 276,514 290,517 304,506 318,496 327,485 347,463 360,448 370,432 387,416 398,413 407,407 420,390 428,389 437,391 453,400 464,403 476,409';
const blueLinks = ['100,461 204,412', '188,485 204,412', '236,504 300,440', '292,488 300,440', '324,507 332,402'];
const redLinks = ['60,538 260,604', '180,548 260,604', '284,540 476,448'];
const buys = [[100, 461], [188, 486], [236, 506], [260, 604], [292, 489], [324, 508], [476, 448]];
const sells = [[60, 538], [180, 548], [204, 410], [284, 541], [300, 441], [332, 402]];

const line = (pts, color, width, dash) =>
  `<polyline points="${pts}" fill="none" stroke="${color}" stroke-width="${width}"${dash ? ' stroke-dasharray="4 3"' : ''}/>`;

function drawChart(id, dx, dy, extra, slowColor, slowWidth) {
  const bars = extra.concat(candles).map(([x, wt, bt, bb, wb, up]) => {
    const body = up ? '#24f32c' : '#d80a0e';
    const wick = up ? '#24f32c' : '#a01018';
    return `<path d="M${x + 0.5} ${wt}V${wb}" stroke="${wick}"/><rect x="${x - 2}" y="${bt}" width="5" height="${bb - bt}" fill="${body}"/>`;
  }).join('');
  const marks = buys.map(([x, y]) => `<path d="M${x + 0.5} ${y - 4}l4.500 4h-2v3h-5v-3h-2z" fill="#2f62a8" stroke="#fff"/>`).join('') +
    sells.map(([x, y]) => `<path d="M${x + 0.5} ${y + 4}l4.500-4h-2v-3h-5v3h-2z" fill="#d02820" stroke="#fff"/>`).join('');
  byId(id).innerHTML = `<path d="M0 ${441.5 - 272}H2000" stroke="#6c6c6c"/><g transform="translate(${dx} ${dy})">` +
    bars + line(slow, slowColor, slowWidth) + line(fast, '#a01420', 1) +
    blueLinks.map((p) => line(p, '#30468c', 1, true)).join('') +
    redLinks.map((p) => line(p, '#9a4a34', 1, true)).join('') + marks +
    '<path d="M472 272h9l-4.500 4z" fill="#999"/></g>';
}
drawChart('chart-a', -13, -272, [[12, 547, 547, 565, 565, 0]], '#a8121c', 1);
drawChart('chart-b', -6, -273, [[4, 545, 547, 555, 556, 1], [12, 541, 547, 565, 566, 0]], '#d01018', 2);
```
